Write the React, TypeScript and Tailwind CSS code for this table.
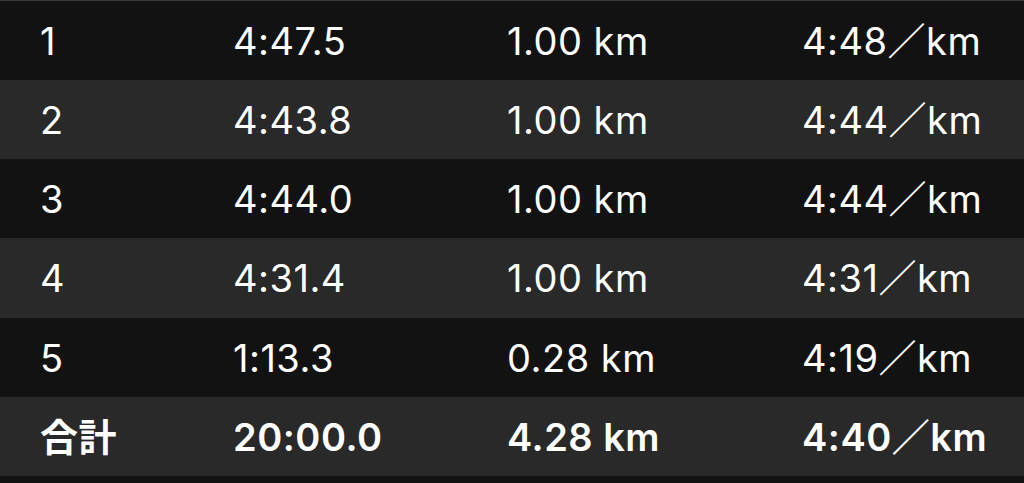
const laps = [
  { no: "1", time: "4:47.5", dist: "1.00 km", pace: "4:48／km", bg: "bg-[#121212]", h: "h-[79px]" },
  { no: "2", time: "4:43.8", dist: "1.00 km", pace: "4:44／km", bg: "bg-[#292929]", h: "h-[79px]" },
  { no: "3", time: "4:44.0", dist: "1.00 km", pace: "4:44／km", bg: "bg-[#121212]", h: "h-[79px]" },
  { no: "4", time: "4:31.4", dist: "1.00 km", pace: "4:31／km", bg: "bg-[#292929]", h: "h-[80px]" },
  { no: "5", time: "1:13.3", dist: "0.28 km", pace: "4:19／km", bg: "bg-[#121212]", h: "h-[79px]" },
];

export default function App() {
  return (
    <div
      className="w-[1024px] h-[483px] bg-[#121212] text-white overflow-hidden border-t border-[#3a3a3a]"
      style={{ fontFamily: 'Inter, "Noto Sans CJK JP", sans-serif' }}
    >
      {laps.map((l) => (
        <Row key={l.no} cells={[l.no, l.time, l.dist, l.pace]} className={`${l.bg} ${l.h}`} />
      ))}
      {/* total */}
      <Row
        cells={["合計", "20:00.0", "4.28 km", "4:40／km"]}
        className="bg-[#292929] h-[79px] font-semibold"
      />
    </div>
  );
}

function Row({ cells, className }: { cells: string[]; className: string }) {
  return (
    <div
      className={`grid grid-cols-[193px_274px_295px_1fr] items-center pl-10 text-[38px] leading-none tracking-[0.5px] ${className}`}
    >
      {cells.map((c, i) => (
        <span key={i} className="whitespace-nowrap">
          {c}
        </span>
      ))}
    </div>
  );
}
